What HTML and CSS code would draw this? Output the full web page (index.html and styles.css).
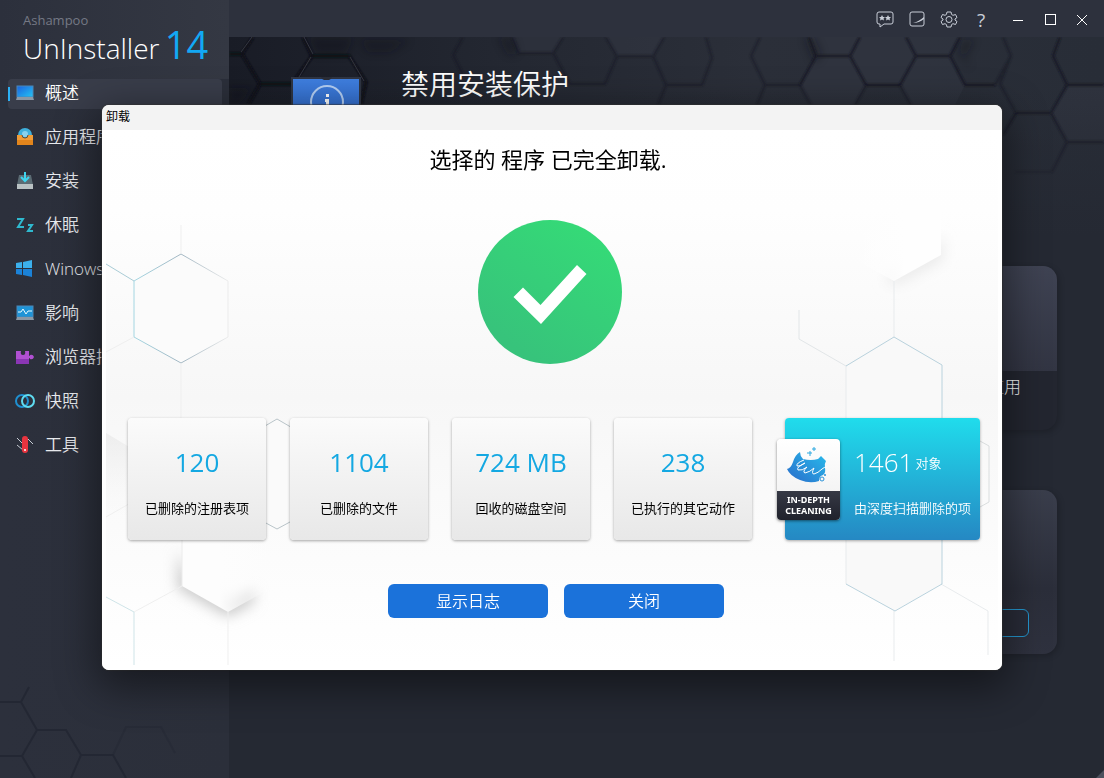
FILE: index.html
```html
<!DOCTYPE html>
<html lang="zh-CN">
<head>
    <meta charset="UTF-8">
    <meta name="viewport" content="width=device-width, initial-scale=1.0">
    <title>Ashampoo UnInstaller 14</title>
    <link rel="stylesheet" href="styles.css">
</head>
<body>
    <div class="app">
        <aside class="sidebar">
            <div class="brand">
                <div class="brand-company">Ashampoo</div>
                <div class="brand-product">UnInstaller <span class="brand-version">14</span></div>
            </div>
            <nav class="nav">
                <a class="nav-item active" href="#overview">
                    <svg class="nav-icon" viewBox="0 0 20 20" aria-hidden="true">
                        <defs>
                            <linearGradient id="screen" x1="0" y1="0" x2="1" y2="1"><stop offset="0" stop-color="#1b62e0"/><stop offset="1" stop-color="#25c4f2"/></linearGradient>
                        </defs>
                        <rect x="2" y="3" width="16" height="11" fill="url(#screen)" stroke="#4b87b8"/>
                        <path d="M2 14h16l1 3H1z" fill="#8b98a5"/>
                    </svg>
                    <span>概述</span>
                </a>
                <a class="nav-item" href="#apps">
                    <svg class="nav-icon" viewBox="0 0 20 20" aria-hidden="true">
                        <circle cx="10" cy="8" r="7" fill="#3fb0dc"/>
                        <circle cx="10" cy="7" r="3" fill="#8ad2ee"/>
                        <path d="M2 8h5q0 3 3 3t3-3h5v10H2z" fill="#f09c38"/>
                        <path d="M2 13h16v5H2z" fill="#e2851c"/>
                        <path d="M7 8q0 3 3 3t3-3" fill="none" stroke="#5a5040" stroke-width="1"/>
                    </svg>
                    <span>应用程序</span>
                </a>
                <a class="nav-item" href="#install">
                    <svg class="nav-icon" viewBox="0 0 20 20" aria-hidden="true">
                        <path d="M4 4h12l2 10H2z" fill="#5b6b73"/>
                        <path d="M2 13h16v5H2z" fill="#b9c1c3"/>
                        <path d="M10 1v8M6 6l4 4 4-4" fill="none" stroke="#3ed4ee" stroke-width="2"/>
                    </svg>
                    <span>安装</span>
                </a>
                <a class="nav-item" href="#hibernate">
                    <svg class="nav-icon" viewBox="0 0 20 20" aria-hidden="true">
                        <path d="M2 4h6l-5 8h6M13 10h4l-4 6h5" fill="none" stroke="#2fb9cf" stroke-width="2"/>
                    </svg>
                    <span>休眠</span>
                </a>
                <a class="nav-item" href="#windows">
                    <svg class="nav-icon" viewBox="0 0 20 20" aria-hidden="true">
                        <path d="M1 4l6-1v6H1zM8 3l9-2v8H8z" fill="#3cb0ec"/>
                        <path d="M1 10h6v6l-6-1zM8 10h9v8l-9-2z" fill="#1b82d8"/>
                    </svg>
                    <span>Winows</span>
                </a>
                <a class="nav-item" href="#impact">
                    <svg class="nav-icon" viewBox="0 0 20 20" aria-hidden="true">
                        <rect x="2" y="3" width="16" height="11" fill="#1e93d6" stroke="#4b87b8"/>
                        <path d="M3 9h3l2-3 3 5 2-3h4" fill="none" stroke="#e6faff" stroke-width="1"/>
                        <path d="M2 14h16l1 3H1z" fill="#8b98a5"/>
                    </svg>
                    <span>影响</span>
                </a>
                <a class="nav-item" href="#browser">
                    <svg class="nav-icon" viewBox="0 0 20 20" aria-hidden="true">
                        <path d="M1 4h5q-1 4 2 4t2-4h4v5q1 0 1-1 3-1 4 2-1 3-4 2 0-1-1-1v6H1z" fill="#b050d2"/>
                        <path d="M1 12h13v5H1z" fill="#8a36b4"/>
                    </svg>
                    <span>浏览器插件</span>
                </a>
                <a class="nav-item" href="#snapshots">
                    <svg class="nav-icon" viewBox="0 0 20 20" aria-hidden="true">
                        <circle cx="7" cy="10" r="6" fill="none" stroke="#1f8fd0" stroke-width="2"/>
                        <circle cx="13" cy="10" r="6" fill="none" stroke="#5fdcf0" stroke-width="2"/>
                    </svg>
                    <span>快照</span>
                </a>
                <a class="nav-item" href="#tools">
                    <svg class="nav-icon" viewBox="0 0 20 20" aria-hidden="true">
                        <path d="M2 3l7 7M2 10l6 5M13 4l5 5" stroke="#c7ccd4" stroke-width="1"/>
                        <path d="M7 4q0-3 3-3t3 3v11q0 3-3 3t-3-3z" fill="#e8343f"/>
                        <circle cx="10" cy="15" r="1" fill="#fff"/>
                    </svg>
                    <span>工具</span>
                </a>
            </nav>
            <svg class="sidebar-art" viewBox="0 678 229 100" aria-hidden="true">
                <g fill="none" stroke="#232733" stroke-width="2">
                    <path d="M0 702h21l8-15M21 702l16 28h29l15 25h32l13 23M37 730l-15 26H0M22 756l13 22M81 755l-10 23"/>
                    <path d="M113 755l13-28h35l14 26" opacity=".5"/>
                </g>
            </svg>
        </aside>

        <main class="main">
            <header class="titlebar">
                <div class="tools">
                    <button class="tool" type="button" aria-label="反馈">
                        <svg viewBox="0 0 20 20">
                            <path d="M4 2h12q2 0 2 2v8q0 2-2 2H9l-4 3v-3H4q-2 0-2-2V4q0-2 2-2z"/>
                            <path d="M7 5l1 2h2l-1.500 1.500.5 2L7 9.500l-2 1 .5-2L4 7h2zM13 5l1 2h2l-1.500 1.500.5 2-2-1-2 1 .5-2L10 7h2z" fill="#c9ced8" stroke="none"/>
                        </svg>
                    </button>
                    <button class="tool" type="button" aria-label="外观">
                        <svg viewBox="0 0 20 20">
                            <rect x="3" y="2" width="14" height="14" rx="2"/>
                            <path d="M6 13q5-1 11-6v2q-5 4-11 4z" fill="#c9ced8" stroke="none"/>
                        </svg>
                    </button>
                    <button class="tool" type="button" aria-label="设置">
                        <svg viewBox="0 0 20 20">
                            <path d="M8 2h4l.6 2.500 1.400.8 2.500-.8 1.500 3-2 1.500v1l2 1.500-1.500 3-2.500-.8-1.400.8L12 17H8l-.6-2.500-1.400-.8-2.500.8-1.500-3L4 10V9L2 7.500l1.500-3 2.500.8 1.400-.8z"/>
                            <circle cx="10" cy="9.500" r="3"/>
                        </svg>
                    </button>
                    <button class="tool help" type="button" aria-label="帮助">?</button>
                </div>
                <div class="window-buttons">
                    <button class="tool" type="button" aria-label="最小化"><svg viewBox="0 0 20 20"><path d="M5 10.500h10"/></svg></button>
                    <button class="tool" type="button" aria-label="最大化"><svg viewBox="0 0 20 20"><rect x="5.500" y="4.500" width="10" height="10"/></svg></button>
                    <button class="tool" type="button" aria-label="退出"><svg viewBox="0 0 20 20"><path d="M5 5l10 10M15 5L5 15"/></svg></button>
                </div>
            </header>

            <div class="content">
                <svg class="hero-art" viewBox="229 37 875 200" aria-hidden="true">
                    <defs>
                        <linearGradient id="heroBg" x1="0" y1="0" x2="1" y2="0">
                            <stop offset="0" stop-color="#191c26"/>
                            <stop offset=".3" stop-color="#232731"/>
                            <stop offset=".6" stop-color="#2b2f39"/>
                            <stop offset="1" stop-color="#282d37"/>
                        </linearGradient>
                        <linearGradient id="heroFade" x1="0" y1="0" x2="0" y2="1">
                            <stop offset="0" stop-color="#252933" stop-opacity="0"/>
                            <stop offset="1" stop-color="#252933"/>
                        </linearGradient>
                        <filter id="blur" x="-50%" y="-50%" width="200%" height="200%"><feGaussianBlur stdDeviation="4"/></filter>
                        <filter id="blurLine"><feGaussianBlur stdDeviation=".8"/></filter>
                    </defs>
                    <rect x="229" y="37" width="875" height="200" fill="url(#heroBg)"/>
                    <g fill="#343743" opacity=".5">
                        <path d="M816 56h34l16 29-12 20h-44l-10-20zM916 56h34l15 29-10 20h-44l-11-20zM860 37h46l10 19-16 29h-34l-16-29zM1067 85h37v57h-37l-16-29zM512 37h51l-10 16h-34zM606 37h58l-11 19h-36zM809 37h51l-10 19h-34zM906 37h54l-10 19h-34z"/>
                    </g>
                    <g fill="#0c0f17" opacity=".35" filter="url(#blur)">
                        <path d="M308 37h46l-8 17h-30zM229 88h24l-14 16h-10zM804 37h10l8 18-8 8zM963 40h12l-10 16 6 14-12-18zM360 40h50l-20 12h-22zM498 37h14l6 16-10 2z"/>
                    </g>
                    <g fill="none" stroke="#161923" stroke-width="2" filter="url(#blurLine)">
                        <path d="M229 54h13l11-17M242 54l18 30h32l20-28-9-19M312 56h37l17 26-5 23M260 84l-12 21" stroke="#0d1018" stroke-width="3"/>
                        <path d="M850 56h-34l-16 29M816 56l-7-19M866 85h34l16-29M916 56h34l15 29h30M950 56l10-19"/>
                        <path d="M850 56l16 29M916 56l-10-19M860 37l-10 19M1060 37l-7 19 14 29h37M1067 85l-16 28h-35l-13 22M1051 113l16 29h37M1067 142l-15 30"/>
                    </g>
                    <g fill="none" stroke="#161923" stroke-width="2" opacity=".6" filter="url(#blurLine)">
                        <path d="M463 37l-10 18 10 20M512 37l7 16h34l10-16M553 53l17 31h35l12-28h36l11-19M606 37l11 19M653 56l13 29h36l10-27-6-21M666 85l-8 20"/>
                        <path d="M760 37l-9 19 14 29h35M765 85l-8 20M800 85l11 20M866 85l-11 20M900 85l11 20M995 85l16-29-8-19M1011 56l-11 28 16 29M1052 172h-37"/>
                    </g>
                    <path d="M241 52l11-15M313 54l-9-17M311 57l-12 20M350 57l14 24" stroke="#41454f" fill="none" opacity=".7"/>
                    <rect x="229" y="87" width="875" height="150" fill="url(#heroFade)"/>
                </svg>

                <div class="page">
                    <section class="hero">
                        <svg class="hero-icon" viewBox="0 0 72 56" aria-hidden="true">
                            <defs>
                                <linearGradient id="laptop" x1="0" y1="0" x2="0" y2="1"><stop offset="0" stop-color="#3f7fe0"/><stop offset="1" stop-color="#2a62c0"/></linearGradient>
                            </defs>
                            <rect width="70" height="56" fill="#2f3543"/>
                            <rect x="2" y="2" width="66" height="52" fill="url(#laptop)"/>
                            <path d="M30 0h11q-1 3-3 3h-5q-2 0-3-3z" fill="#2b2e38"/>
                            <circle cx="36" cy="25" r="16" fill="none" stroke="#b5d0f5" stroke-width="2"/>
                            <path d="M35 17h3v3h-3zM34 22h4v13h-3v-10h-1z" fill="#fff"/>
                        </svg>
                        <h1>禁用安装保护</h1>
                    </section>
                    <div class="panels">
                        <section class="panel">
                            <div class="panel-picture"></div>
                            <div class="panel-caption">应用</div>
                        </section>
                        <section class="panel panel-action">
                            <button class="outline-button" type="button" aria-label="打开"></button>
                        </section>
                    </div>
                </div>
            </div>
            <svg class="grip" viewBox="0 0 8 8" aria-hidden="true"><path d="M8 0v8H0z" fill="#4c505d"/></svg>
        </main>
    </div>

    <div class="overlay">
        <section class="dialog" role="dialog" aria-labelledby="dialog-title">
            <header class="dialog-title" id="dialog-title">卸载</header>
            <div class="dialog-body">
                <svg class="dialog-art" viewBox="102 130 900 540" preserveAspectRatio="xMidYMid slice" aria-hidden="true">
                    <defs>
                        <linearGradient id="paper" x1="0" y1="0" x2="0" y2="1">
                            <stop offset="0" stop-color="#fff"/>
                            <stop offset=".15" stop-color="#fefefe"/>
                            <stop offset=".5" stop-color="#f7f7f7"/>
                            <stop offset=".8" stop-color="#fcfcfc"/>
                            <stop offset="1" stop-color="#fff"/>
                        </linearGradient>
                        <linearGradient id="edge" x1="0" y1="0" x2="1" y2="0">
                            <stop offset="0" stop-color="#a4d6e2"/>
                            <stop offset=".5" stop-color="#a2b6c2"/>
                            <stop offset="1" stop-color="#ececec"/>
                        </linearGradient>
                        <linearGradient id="shade" x1="0" y1="0" x2="0" y2="1">
                            <stop offset="0" stop-color="#e2e2e2"/>
                            <stop offset="1" stop-color="#f9f9f9" stop-opacity="0"/>
                        </linearGradient>
                        <linearGradient id="whiteFade" x1="0" y1="0" x2="1" y2="0">
                            <stop offset=".4" stop-color="#fdfdfd"/>
                            <stop offset="1" stop-color="#fdfdfd" stop-opacity="0"/>
                        </linearGradient>
                        <linearGradient id="whiteFadeLeft" x1="1" y1="0" x2="0" y2="0">
                            <stop offset=".4" stop-color="#fefefe"/>
                            <stop offset="1" stop-color="#fefefe" stop-opacity="0"/>
                        </linearGradient>
                        <filter id="soft" x="-50%" y="-50%" width="200%" height="200%"><feGaussianBlur stdDeviation="7"/></filter>
                    </defs>
                    <rect x="102" y="130" width="900" height="540" fill="#fff"/>
                    <rect x="106" y="130" width="892" height="535" fill="url(#paper)"/>
                    <path d="M178 550v38l50 28 26-14v-12l-26 10-40-22z" fill="#c4c4c4" filter="url(#soft)"/>
                    <path d="M182 530v56l46 26 47-26v-56z" fill="url(#whiteFade)"/>
                    <path d="M943 235v25l-48 25-10-6 10-8 40-25z" fill="#e9e9e9" filter="url(#soft)"/>
                    <path d="M850 200h91v55l-47 26-44-24z" fill="url(#whiteFadeLeft)"/>
                    <path d="M106 433l40 24v70l-40-20z" fill="url(#shade)" opacity=".5"/>
                    <path d="M134 281l47-27 47 27v56l-47 26-47-26z" fill="#fbfbfb" stroke="url(#edge)"/>
                    <path d="M106 264l28 17" stroke="#a9ccd6"/>
                    <path d="M181 225v29M181 363v56M106 352l28-15M228 612v53M134 612l48-26M106 517l28-16" stroke="#efefef"/>
                    <path d="M182 540v46" stroke="#ececec"/>
                    <path d="M106 597l28 15v53" fill="none" stroke="#cfe4e8"/>
                    <path d="M253 433l24-14 24 14v83l-24 13-24-13z" fill="#fafafa" stroke="#b9c4c9"/>
                    <path d="M799 310v29l47 27" fill="none" stroke="#e2e6e8"/>
                    <path d="M846 366l48-29 48 28v219l-48 27-48-27z" fill="#f9f9f9"/>
                    <path d="M894 281v56M846 366v218M894 611v50M988 611v44M941 584l47 27" stroke="#e8ebed"/>
                    <path d="M846 366l48-29 48 28v219l-47 27-49-27" fill="none" stroke="#b9d2dd"/>
                    <path d="M980 441l9 5v56l-9 5" fill="none" stroke="#dadedf"/>
                </svg>
                <div class="result">
                    <h2>选择的 程序 已完全卸载.</h2>
                    <svg class="check" viewBox="0 0 144 144" role="img" aria-label="完成">
                        <defs>
                            <linearGradient id="green" x1="0" y1="1" x2=".7" y2="0"><stop offset=".2" stop-color="#37c37b"/><stop offset="1" stop-color="#35da77"/></linearGradient>
                        </defs>
                        <circle cx="72" cy="72" r="72" fill="url(#green)"/>
                        <path d="M35.500 77l9.500-9.500L62.500 85 99 45l9.500 9L63 104z" fill="#fff"/>
                    </svg>
                    <div class="stats">
                        <div class="stat">
                            <div class="stat-value">120</div>
                            <div class="stat-label">已删除的注册表项</div>
                        </div>
                        <div class="stat">
                            <div class="stat-value">1104</div>
                            <div class="stat-label">已删除的文件</div>
                        </div>
                        <div class="stat">
                            <div class="stat-value">724 MB</div>
                            <div class="stat-label">回收的磁盘空间</div>
                        </div>
                        <div class="stat">
                            <div class="stat-value">238</div>
                            <div class="stat-label">已执行的其它动作</div>
                        </div>
                        <div class="stat stat-deep">
                            <div class="badge">
                                <svg class="badge-icon" viewBox="0 0 63 52" aria-hidden="true">
                                    <defs>
                                        <linearGradient id="bowl" x1="0" y1="1" x2="1" y2="0"><stop offset="0" stop-color="#2a6cca"/><stop offset="1" stop-color="#28bcec"/></linearGradient>
                                    </defs>
                                    <path d="M10 30q4-1 6-7 2-7 7-10 0 4 3 7 8 2 15 0l3-3 5 5q-2 3-1 7 1 5-2 7-4 1-4 6-9 3-19-1-10-4-13-11z" fill="url(#bowl)"/>
                                    <path d="M27 21q-8 3-7 6 3 1 8-3-9 4-7 7 4 1 9-3-5 5-2 6 5-1 9-5-3 6 0 6 4-1 8-5 2-2 5-2" fill="none" stroke="#fff"/>
                                    <path d="M33 12v5M30 14h5M37 8v4M35 10h4" stroke="#2ba8e0" fill="none"/>
                                    <circle cx="45" cy="40" r="2" fill="none" stroke="#2a92d8"/>
                                    <circle cx="48" cy="36" r="1" fill="#2a92d8"/>
                                </svg>
                                <div class="badge-text">IN-DEPTH<br>CLEANING</div>
                            </div>
                            <div class="stat-value">1461<small>对象</small></div>
                            <div class="stat-label">由深度扫描删除的项</div>
                        </div>
                    </div>
                    <div class="actions">
                        <button class="primary" type="button">显示日志</button>
                        <button class="primary" type="button">关闭</button>
                    </div>
                </div>
            </div>
        </section>
    </div>
</body>
</html>
```

FILE: styles.css
```css
* {
    box-sizing: border-box;
}

body {
    margin: 0;
    font-family: "Open Sans", "Noto Sans CJK SC", sans-serif;
    font-weight: 300;
    background-color: #252933;
    color: #fff;
}

button {
    font-family: inherit;
    font-weight: inherit;
    cursor: pointer;
}

h1, h2 {
    margin: 0;
    font-weight: 300;
}

.app {
    display: grid;
    grid-template-columns: 229px 1fr;
    min-height: 100vh;
}

/* sidebar */
.sidebar {
    display: flex;
    flex-direction: column;
    background: linear-gradient(to right, #2c303c, #2b2f3a);
}

.brand {
    height: 79px;
    padding: 11px 0 0 23px;
    background: linear-gradient(to right, #2c303c, #343843);
}

.brand-company {
    font-size: 13px;
    line-height: 18px;
    font-weight: 400;
    color: #757985;
}

.brand-product {
    font-size: 28px;
    line-height: 30px;
    white-space: nowrap;
}

.brand-version {
    font-size: 38px;
    font-weight: 400;
    color: #12a8f4;
    margin-left: -2px;
}

.nav {
    display: flex;
    flex-direction: column;
    gap: 14px;
    padding: 0 7px 0 8px;
}

.nav-item {
    display: flex;
    align-items: center;
    gap: 10px;
    height: 30px;
    padding: 0 0 3px 5px;
    border-left: 2px solid transparent;
    border-radius: 4px;
    color: #e8eaee;
    font-size: 17px;
    font-weight: 350;
    white-space: nowrap;
    text-decoration: none;
}

.nav-item span {
    line-height: 24px;
}

.nav-item.active {
    background: linear-gradient(#2cb0f5, #2cb0f5) left center / 2px 14px no-repeat, #393d4a;
    background-origin: border-box;
    color: #fff;
}

.nav-icon {
    width: 20px;
    height: 20px;
}

.sidebar-art {
    width: 100%;
    margin-top: auto;
}

/* main window */
.main {
    display: flex;
    flex-direction: column;
    min-width: 0;
}

.titlebar {
    display: flex;
    justify-content: flex-end;
    align-items: center;
    gap: 17px;
    height: 37px;
    padding-right: 12px;
    background: #2d313d;
}

.tools, .window-buttons {
    display: flex;
    gap: 12px;
    padding-top: 2px;
}

.tool {
    width: 20px;
    height: 20px;
    padding: 0;
    border: none;
    background: none;
    color: #c9ced8;
}

.tool svg {
    display: block;
    fill: none;
    stroke: #c9ced8;
}

.window-buttons svg {
    stroke: #fff;
}

.help {
    font-size: 19px;
    line-height: 20px;
    font-weight: 400;
}

.content {
    display: grid;
    flex: 1;
}

.hero-art, .page {
    grid-area: 1 / 1;
    width: 100%;
}

.hero {
    display: flex;
    gap: 38px;
    min-height: 229px;
    padding: 40px 0 0 62px;
}

.hero-icon {
    width: 72px;
    height: 56px;
}

.hero h1 {
    font-size: 28px;
    line-height: 14px;
    font-weight: 350;
}

.panels {
    display: flex;
    flex-direction: column;
    gap: 60px;
    padding: 0 47px 0 62px;
}

.panel {
    height: 164px;
    overflow: hidden;
    border-radius: 14px;
    background: #232630;
    box-shadow: 2px 2px 6px rgba(0, 0, 0, 0.2);
}

.panel-picture {
    height: 105px;
    background: linear-gradient(#3f4353, #323543);
}

.panel-caption {
    padding: 4px 36px 0 0;
    font-size: 17px;
    line-height: 24px;
    text-align: right;
}

.panel-action {
    display: flex;
    justify-content: flex-end;
    align-items: flex-end;
    padding: 0 28px 17px 0;
    background: linear-gradient(#3a3e4c, #2b2e3a 60%, #2f323f);
}

.outline-button {
    width: 160px;
    height: 28px;
    border: 1px solid #2497cf;
    border-radius: 6px;
    background: #292c38;
}

.grip {
    align-self: flex-end;
    width: 8px;
    height: 8px;
}

/* uninstall result dialog */
.overlay {
    position: fixed;
    inset: 0;
    display: grid;
    place-items: center;
    padding-bottom: 3px;
}

.dialog {
    width: 90%;
    max-width: 900px;
    overflow: hidden;
    border-radius: 7px;
    background: #fff;
    color: #000;
    box-shadow: 0 12px 40px 6px rgba(0, 0, 0, 0.45), 0 0 1px 1px rgba(60, 60, 60, 0.6);
}

.dialog-title {
    height: 25px;
    padding-left: 4px;
    background: #f3f3f3;
    font-size: 12px;
    line-height: 24px;
    font-weight: 400;
}

.dialog-body {
    display: grid;
}

.dialog-art, .result {
    grid-area: 1 / 1;
    width: 100%;
}

.result {
    display: flex;
    flex-direction: column;
    align-items: center;
    padding: 14px 22px 52px 26px;
}

.result h2 {
    padding-right: 12px;
    font-size: 22px;
    line-height: 30px;
    font-weight: 400;
}

.check {
    width: 144px;
    height: 144px;
    margin: 46px 8px 54px 0;
}

.stats {
    display: grid;
    grid-template-columns: repeat(4, 1fr) 204px;
    gap: 24px;
    width: 100%;
}

.stat {
    height: 122px;
    padding-top: 27px;
    border-radius: 4px;
    background: linear-gradient(#fbfbfb, #e8e8e8);
    box-shadow: 0 1px 3px rgba(0, 0, 0, 0.35);
    text-align: center;
}

.stat-value {
    height: 34px;
    font-size: 26px;
    line-height: 34px;
    color: #14a8e2;
    font-weight: 400;
}

.stat-label {
    margin-top: 17px;
    font-size: 13px;
    line-height: 24px;
    font-weight: 400;
    white-space: nowrap;
}

.stat-deep {
    position: relative;
    margin-left: 9px;
    padding-left: 69px;
    background: linear-gradient(#20dcec, #2588c3);
    text-align: left;
}

.stat-deep .stat-value, .stat-deep .stat-label {
    color: #fff;
    font-weight: 350;
}

.stat-value small {
    margin-left: 2px;
    font-size: 13px;
    line-height: 20px;
    vertical-align: 4px;
}

.badge {
    position: absolute;
    top: 21px;
    left: -8px;
    width: 63px;
    overflow: hidden;
    border-radius: 4px;
    background: linear-gradient(#fff, #eee);
    box-shadow: 0 1px 3px rgba(0, 0, 0, 0.5);
}

.badge-icon {
    display: block;
}

.badge-text {
    padding: 3px 0 4px;
    background: linear-gradient(#363945, #20222c);
    color: #fff;
    font-family: "Noto Sans", sans-serif;
    font-size: 9px;
    line-height: 11px;
    font-weight: 700;
    text-align: center;
}

.actions {
    display: flex;
    gap: 16px;
    margin-top: 44px;
    padding-left: 4px;
}

.primary {
    width: 160px;
    height: 34px;
    padding: 0 0 2px;
    border: none;
    border-radius: 6px;
    background: #1b72da;
    color: #fff;
    font-size: 16px;
    font-weight: 350;
}

.primary:hover {
    background: #2a80e6;
}
```
